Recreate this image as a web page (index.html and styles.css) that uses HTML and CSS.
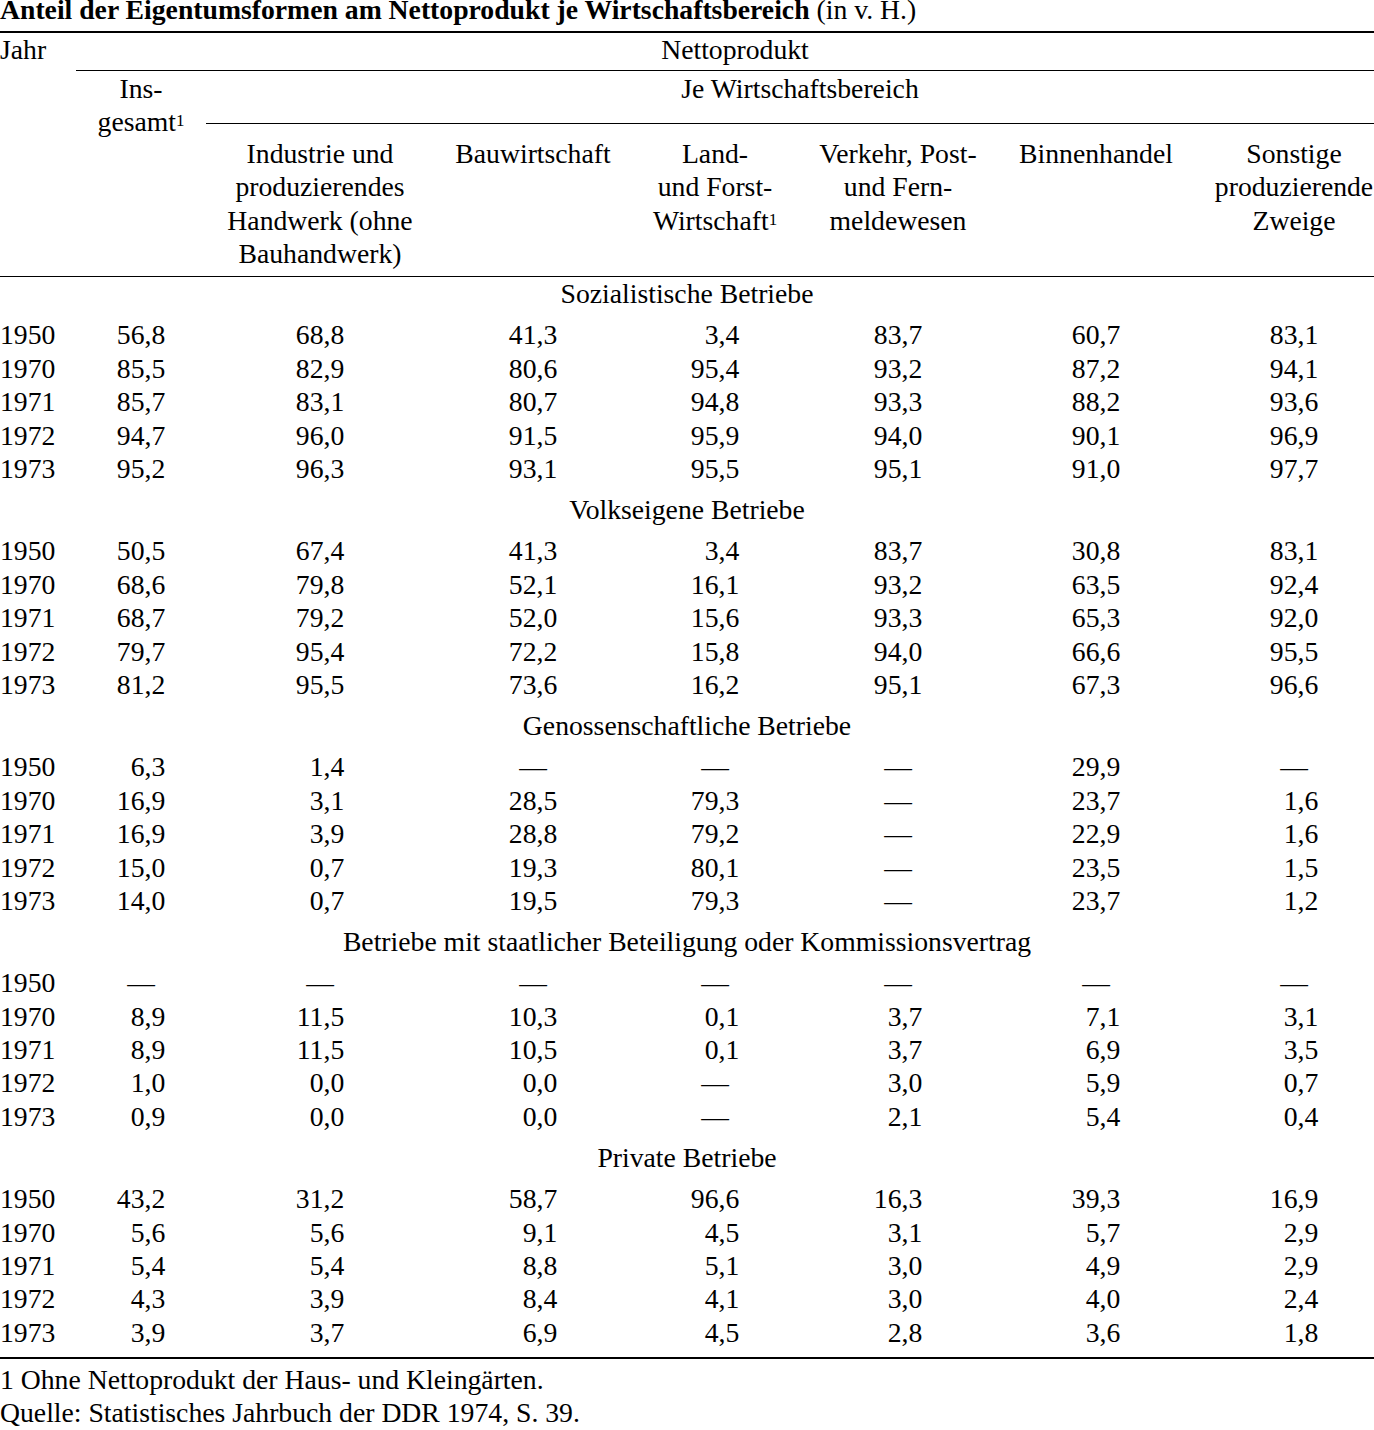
FILE: index.html
```html
<!DOCTYPE html>
<html lang="de">
<head>
<meta charset="utf-8">
<title>Anteil der Eigentumsformen am Nettoprodukt</title>
<link rel="stylesheet" href="styles.css">
</head>
<body>
<div class="page">
  <div class="title"><b>Anteil der Eigentumsformen am Nettoprodukt je Wirtschaftsbereich</b> (in v. H.)</div>

  <div class="thead">
    <div class="h-jahr">Jahr</div>
    <div class="h-netto">Nettoprodukt</div>
    <div class="h-ins">Ins-<br>gesamt<sup class="fn">1</sup></div>
    <div class="h-je">Je Wirtschaftsbereich</div>
    <div class="h-col">Industrie und<br>produzierendes<br>Handwerk (ohne<br>Bauhandwerk)</div>
    <div class="h-col">Bauwirtschaft</div>
    <div class="h-col">Land-<br>und Forst-<br>Wirtschaft<sup class="fn">1</sup></div>
    <div class="h-col">Verkehr, Post-<br>und Fern-<br>meldewesen</div>
    <div class="h-col">Binnenhandel</div>
    <div class="h-col">Sonstige<br>produzierende<br>Zweige</div>
  </div>

  <div class="tbody" id="tbody"></div>

  <div class="notes">
    <p>1 Ohne Nettoprodukt der Haus- und Kleingärten.</p>
    <p>Quelle: Statistisches Jahrbuch der DDR 1974, S. 39.</p>
  </div>
</div>
<script src="script.js"></script>
</body>
</html>
```

FILE: script.js
```js
var sections = [
  ["Sozialistische Betriebe", [
    ["1950","56,8","68,8","41,3","3,4","83,7","60,7","83,1"],
    ["1970","85,5","82,9","80,6","95,4","93,2","87,2","94,1"],
    ["1971","85,7","83,1","80,7","94,8","93,3","88,2","93,6"],
    ["1972","94,7","96,0","91,5","95,9","94,0","90,1","96,9"],
    ["1973","95,2","96,3","93,1","95,5","95,1","91,0","97,7"]
  ]],
  ["Volkseigene Betriebe", [
    ["1950","50,5","67,4","41,3","3,4","83,7","30,8","83,1"],
    ["1970","68,6","79,8","52,1","16,1","93,2","63,5","92,4"],
    ["1971","68,7","79,2","52,0","15,6","93,3","65,3","92,0"],
    ["1972","79,7","95,4","72,2","15,8","94,0","66,6","95,5"],
    ["1973","81,2","95,5","73,6","16,2","95,1","67,3","96,6"]
  ]],
  ["Genossenschaftliche Betriebe", [
    ["1950","6,3","1,4","—","—","—","29,9","—"],
    ["1970","16,9","3,1","28,5","79,3","—","23,7","1,6"],
    ["1971","16,9","3,9","28,8","79,2","—","22,9","1,6"],
    ["1972","15,0","0,7","19,3","80,1","—","23,5","1,5"],
    ["1973","14,0","0,7","19,5","79,3","—","23,7","1,2"]
  ]],
  ["Betriebe mit staatlicher Beteiligung oder Kommissionsvertrag", [
    ["1950","—","—","—","—","—","—","—"],
    ["1970","8,9","11,5","10,3","0,1","3,7","7,1","3,1"],
    ["1971","8,9","11,5","10,5","0,1","3,7","6,9","3,5"],
    ["1972","1,0","0,0","0,0","—","3,0","5,9","0,7"],
    ["1973","0,9","0,0","0,0","—","2,1","5,4","0,4"]
  ]],
  ["Private Betriebe", [
    ["1950","43,2","31,2","58,7","96,6","16,3","39,3","16,9"],
    ["1970","5,6","5,6","9,1","4,5","3,1","5,7","2,9"],
    ["1971","5,4","5,4","8,8","5,1","3,0","4,9","2,9"],
    ["1972","4,3","3,9","8,4","4,1","3,0","4,0","2,4"],
    ["1973","3,9","3,7","6,9","4,5","2,8","3,6","1,8"]
  ]]
];

var tbody = document.getElementById("tbody");
sections.forEach(function (sec) {
  var s = document.createElement("div");
  s.className = "section";
  var h = document.createElement("div");
  h.className = "sec-title";
  h.textContent = sec[0];
  s.appendChild(h);
  sec[1].forEach(function (r) {
    var row = document.createElement("div");
    row.className = "row";
    r.forEach(function (v, i) {
      var c = document.createElement("div");
      if (i === 0) {
        c.className = "year";
        c.textContent = v;
      } else {
        c.className = "cell";
        if (v === "—") {
          c.textContent = v;
        } else {
          var n = document.createElement("span");
          n.className = "num";
          n.textContent = v;
          c.appendChild(n);
        }
      }
      row.appendChild(c);
    });
    s.appendChild(row);
  });
  tbody.appendChild(s);
});
```

FILE: styles.css
```css
html, body {
  margin: 0;
  padding: 0;
  background: #fff;
  overflow: hidden;
}

.page {
  width: 1374px;
  overflow: hidden;
  font-family: "Liberation Serif", "Times New Roman", serif;
  font-size: 27.7px;
  line-height: 33.4px;
  color: #000;
}

.title {
  height: 20px;
  line-height: 20px;
  margin-bottom: 11px;
  white-space: nowrap;
}

.fn {
  font-size: 17px;
  line-height: 0;
  vertical-align: 5px;
}

.thead {
  width: 1394px;
  display: grid;
  grid-template-columns: 76px 130px 228px 198px 166px 200px 196px 200px;
  border-top: 2px solid #000;
  border-bottom: 1px solid #000;
}

.h-jahr {
  grid-column: 1;
  grid-row: 1 / 4;
}

.h-netto {
  grid-column: 2 / 9;
  grid-row: 1;
  text-align: center;
  padding-bottom: 3.6px;
  border-bottom: 1px solid #000;
}

.h-ins {
  grid-column: 2;
  grid-row: 2 / 4;
  text-align: center;
  padding-top: 1px;
}

.h-je {
  grid-column: 3 / 9;
  grid-row: 2;
  text-align: center;
  padding-top: 1px;
  padding-bottom: 17.6px;
  border-bottom: 1px solid #000;
}

.h-col {
  grid-row: 3;
  text-align: center;
  white-space: nowrap;
  padding-top: 13px;
  padding-bottom: 5.4px;
}

.tbody {
  width: 1394px;
  border-bottom: 2px solid #000;
}

.section {
  padding-bottom: 7.6px;
}

.sec-title {
  width: 1374px;
  text-align: center;
  margin-bottom: 8px;
  white-space: nowrap;
}

.row {
  display: grid;
  grid-template-columns: 76px 130px 228px 198px 166px 200px 196px 200px;
  height: 33.4px;
}

.year {
  text-align: left;
}

.cell {
  text-align: center;
}

.num {
  display: inline-block;
  width: 1.75em;
  text-align: right;
}

.notes {
  margin-top: 4px;
}

.notes p {
  margin: 0;
}
```
